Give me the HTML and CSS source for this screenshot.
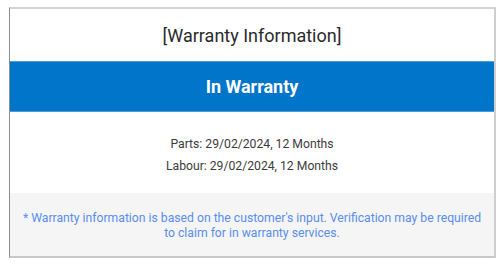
FILE: index.html
```html
<!DOCTYPE html>
<html>
<head>
<meta charset="utf-8">
<link rel="stylesheet" href="styles.css">
</head>
<body>
<div class="card">
  <div class="title">[Warranty Information]</div>
  <div class="status">In Warranty</div>
  <div class="details">
    <div class="line">Parts: 29/02/2024, 12 Months</div>
    <div class="line">Labour: 29/02/2024, 12 Months</div>
  </div>
  <div class="note">* Warranty information is based on the customer's input. Verification may be required to claim for in warranty services.</div>
</div>
</body>
</html>
```
FILE: styles.css
```css
html, body { margin: 0; padding: 0; background: #fff; }
body { padding: 7px 5px 0 9px; font-family: Roboto, "Noto Sans", sans-serif; }
.card {
  width: 484px;
  height: 247px;
  border-top: 2px solid #d4d4d4;
  border-right: 2px solid #cfcfcf;
  border-bottom: 2px solid #c8c8c8;
  border-left: 1px solid #8c8c8c;
  display: flex;
  flex-direction: column;
  box-sizing: content-box;
}
.title {
  height: 52px;
  display: flex; align-items: center; justify-content: center;
  font-size: 18px; color: #2a2a2a;
}
.status {
  height: 49px;
  border-top: 1px solid #4b9bd9;
  border-bottom: 1px solid #4b9bd9;
  background: #0075c9;
  color: #fff;
  font-weight: 700; font-size: 18px;
  display: flex; align-items: center; justify-content: center;
}
.details {
  height: 81px;
  display: flex; flex-direction: column; align-items: center; justify-content: center;
  gap: 8px;
  padding-top: 4px;
  box-sizing: border-box;
  font-size: 12.2px; line-height: 14px; color: #3c3c3c;
}
.note {
  flex: 1;
  background: #f5f5f5;
  color: #5a8ef0;
  font-size: 12.2px;
  line-height: 15px;
  text-align: center;
  padding: 2px 10px 0;
  display: flex; align-items: center; justify-content: center;
}
```
